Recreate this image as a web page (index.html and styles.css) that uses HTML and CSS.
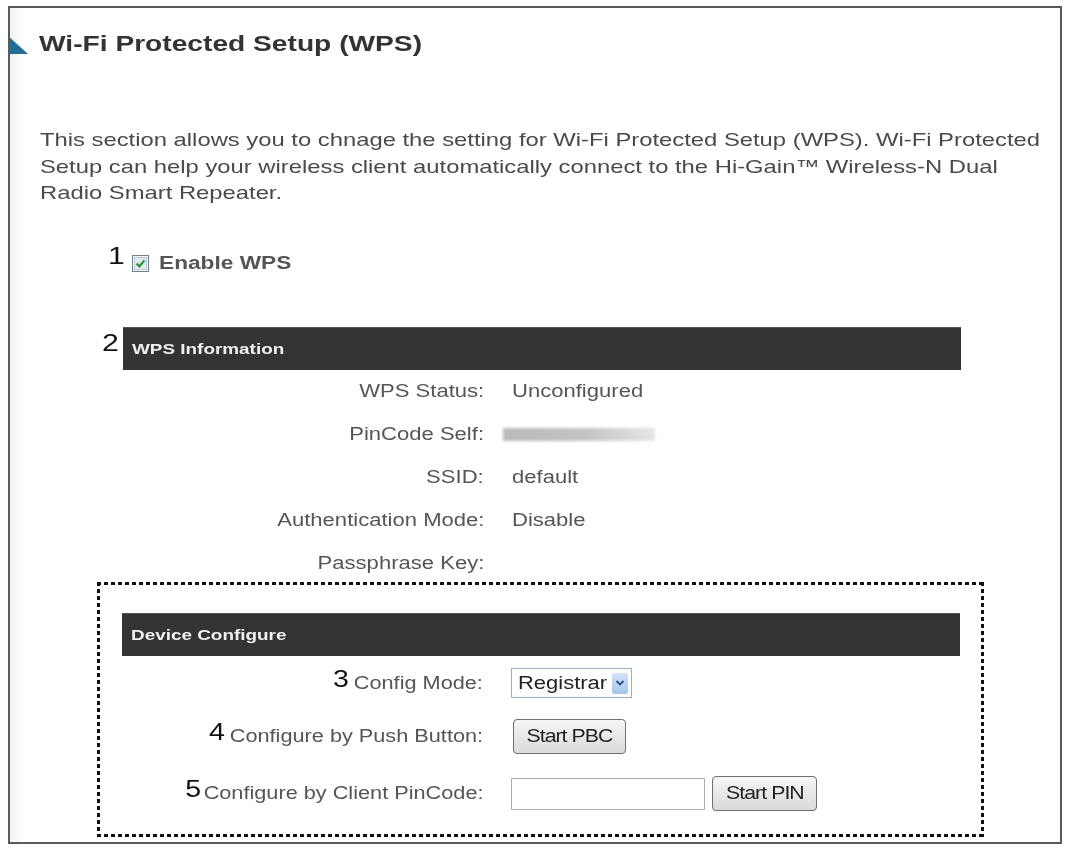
FILE: index.html
```html
<!DOCTYPE html>
<html lang="en">
<head>
<meta charset="utf-8">
<title>Wi-Fi Protected Setup (WPS)</title>
<link rel="stylesheet" href="styles.css">
</head>
<body>
<div class="frame">
  <h1 class="page-title"><span class="title-mark"></span><span class="sx">Wi-Fi Protected Setup (WPS)</span></h1>

  <p class="intro">This section allows you to chnage the setting for Wi-Fi Protected Setup (WPS). Wi-Fi Protected<br>Setup can help your wireless client automatically connect to the Hi-Gain™ Wireless-N Dual<br>Radio Smart Repeater.</p>

  <div class="enable-row">
    <span class="num sx">1</span>
    <span class="checkbox"><svg viewBox="0 0 17 17" width="17" height="17"><rect x="0.5" y="0.5" width="16" height="16" fill="#f2f5f7" stroke="#6f8191"/><rect x="2.5" y="2.5" width="12" height="12" fill="#e3e9ee" stroke="#c0cad3"/><path d="M4.6 8.6 L7.4 11.3 L12.4 5.6" fill="none" stroke="#2e9a3a" stroke-width="2.3"/></svg></span>
    <span class="enable-label sx">Enable WPS</span>
  </div>

  <div class="section info">
    <div class="bar-row">
      <span class="num bar-num sx">2</span>
      <div class="bar"><span class="sx">WPS Information</span></div>
    </div>
    <div class="rows">
      <div class="label"><span class="sx r">WPS Status:</span></div><div class="value"><span class="sx">Unconfigured</span></div>
      <div class="label"><span class="sx r">PinCode Self:</span></div><div class="value"><span class="pin-blur"></span></div>
      <div class="label"><span class="sx r">SSID:</span></div><div class="value"><span class="sx">default</span></div>
      <div class="label"><span class="sx r">Authentication Mode:</span></div><div class="value"><span class="sx">Disable</span></div>
      <div class="label last"><span class="sx r">Passphrase Key:</span></div><div class="value last"></div>
    </div>
  </div>

  <div class="dotted">
    <div class="bar"><span class="sx">Device Configure</span></div>
    <div class="rows cfg">
      <div class="label"><span class="sx r"><span class="num">3</span>Config Mode:</span></div>
      <div class="value">
        <span class="select"><span class="sx">Registrar</span><span class="select-arrow"><svg viewBox="0 0 10 8" width="10" height="8"><path d="M1.5 2 L5 5.5 L8.5 2" fill="none" stroke="#2a4f8a" stroke-width="1.8"/></svg></span></span>
      </div>
      <div class="label"><span class="sx r"><span class="num">4</span>Configure by Push Button:</span></div>
      <div class="value"><span class="btn pbc"><span class="sx c">Start PBC</span></span></div>
      <div class="label"><span class="sx r"><span class="num tight">5</span>Configure by Client PinCode:</span></div>
      <div class="value"><span class="text-input"></span><span class="btn pin"><span class="sx c">Start PIN</span></span></div>
    </div>
  </div>
</div>
</body>
</html>
```

FILE: styles.css
```css
html, body {
  margin: 0;
  padding: 0;
  background: #fff;
}

body {
  font-family: "Liberation Sans", Arial, sans-serif;
  color: #444;
}

/* the page's type is set wide: glyphs are stretched horizontally */
.sx {
  display: inline-block;
  white-space: nowrap;
  transform: scaleX(1.26);
  transform-origin: left center;
}

.sx.r {
  transform-origin: right center;
}

.sx.c {
  transform-origin: center center;
}

.frame {
  box-sizing: border-box;
  margin: 6px 0 0 8px;
  width: 1054px;
  height: 838px;
  border: 2px solid #5a5a5a;
  background: linear-gradient(90deg, #f1f1f1 0, #fff 14px);
  overflow: hidden;
}

.page-title {
  display: flex;
  align-items: center;
  margin: 0;
  height: 46px;
  padding-top: 13px;
  font-size: 22px;
  font-weight: bold;
  color: #333;
}

.page-title .sx {
  transform: scaleX(1.28);
}

.title-mark {
  width: 0;
  height: 0;
  margin: 2px 11px 0 -2px;
  border-right: 20px solid transparent;
  border-bottom: 18px solid #1e6e96;
}

.intro {
  margin: 60px 0 0 30px;
  width: 900px;
  font-size: 18.6px;
  line-height: 26.5px;
  color: #4a4a4a;
  white-space: nowrap;
  transform: scaleX(1.28);
  transform-origin: left top;
}

.enable-row {
  display: flex;
  align-items: center;
  margin: 38px 0 0 98px;
  height: 34px;
}

.num {
  font-size: 24px;
  color: #111;
  line-height: 1;
}

.enable-row .num {
  margin-top: -12px;
  margin-right: 11px;
}

.checkbox {
  display: inline-flex;
  margin-top: 4px;
}

.enable-label {
  margin-left: 10px;
  margin-top: 4px;
  font-size: 18px;
  font-weight: bold;
  color: #555;
}

.section.info {
  margin: 48px 0 0 93px;
}

.bar-row {
  display: flex;
  align-items: flex-start;
}

.bar-num {
  width: 20px;
  margin-top: 4px;
  margin-left: -1px;
  margin-right: 1px;
}

.bar {
  box-sizing: border-box;
  width: 838px;
  height: 43px;
  padding-left: 9px;
  background: #333;
  border-top: 1px solid #555;
  color: #f0f0f0;
  font-size: 15px;
  font-weight: bold;
  display: flex;
  align-items: center;
}

.rows {
  display: grid;
  grid-template-columns: 361px 1fr;
  column-gap: 28px;
  font-size: 17.5px;
  color: #555;
}

.info .rows {
  margin-left: 20px;
}

.label, .value {
  height: 43px;
  display: flex;
  align-items: center;
}

.label {
  justify-content: flex-end;
}

.label.last, .value.last {
  height: 40px;
  padding-top: 4px;
  box-sizing: border-box;
}

.pin-blur {
  display: block;
  margin-left: -9px;
  width: 152px;
  height: 13px;
  background: linear-gradient(90deg, #b9b9b9 0, #c4c4c4 55%, #e6e6e6 100%);
  filter: blur(1.5px);
}

.dotted {
  box-sizing: border-box;
  margin: 0 0 0 87px;
  width: 887px;
  height: 255px;
  padding: 31px 0 0 25px;
  background:
    repeating-linear-gradient(90deg, #111 0 4px, transparent 4px 7px) left top / 100% 3px no-repeat,
    repeating-linear-gradient(90deg, #111 0 4px, transparent 4px 7px) left bottom / 100% 3px no-repeat,
    repeating-linear-gradient(180deg, #111 0 4px, transparent 4px 7px) left top / 3px 100% no-repeat,
    repeating-linear-gradient(180deg, #111 0 4px, transparent 4px 7px) right top / 3px 100% no-repeat;
}

.cfg .label .sx {
  transform: scaleX(1.24);
}

.cfg .num {
  display: inline-block;
  margin-top: -8px;
  margin-right: 4px;
  vertical-align: 2px;
  font-size: 23px;
}

.cfg .num.tight {
  margin-right: 2px;
}

.cfg .label, .cfg .value {
  height: 51px;
}

.cfg .label:nth-child(1), .cfg .value:nth-child(2) {
  height: 55px;
}

.cfg .label:nth-child(5), .cfg .value:nth-child(6) {
  height: 64px;
}

.select {
  box-sizing: border-box;
  display: inline-flex;
  align-items: center;
  width: 121px;
  height: 30px;
  padding: 0 3px 0 6px;
  border: 1px solid #9ab1cc;
  background: #fff;
  color: #222;
  font-size: 18px;
  justify-content: space-between;
}

.select .sx {
  transform: scaleX(1.22);
}

.select-arrow {
  display: inline-flex;
  align-items: center;
  justify-content: center;
  width: 16px;
  height: 21px;
  background: linear-gradient(#d3e3f7, #a9c4ea);
  border-radius: 2px;
}

.btn {
  box-sizing: border-box;
  display: inline-flex;
  align-items: center;
  justify-content: center;
  height: 35px;
  border: 1px solid #707070;
  border-radius: 4px;
  background: linear-gradient(#f6f6f6, #dadada);
  color: #222;
  font-size: 18px;
  letter-spacing: -0.8px;
}

.btn .sx {
  transform: scaleX(1.18);
}

.btn.pbc {
  width: 113px;
  margin-left: 2px;
}

.btn.pin {
  width: 105px;
  margin-left: 7px;
}

.text-input {
  box-sizing: border-box;
  display: inline-block;
  width: 194px;
  height: 32px;
  border: 1px solid #a5acb5;
  background: #fff;
}
```
